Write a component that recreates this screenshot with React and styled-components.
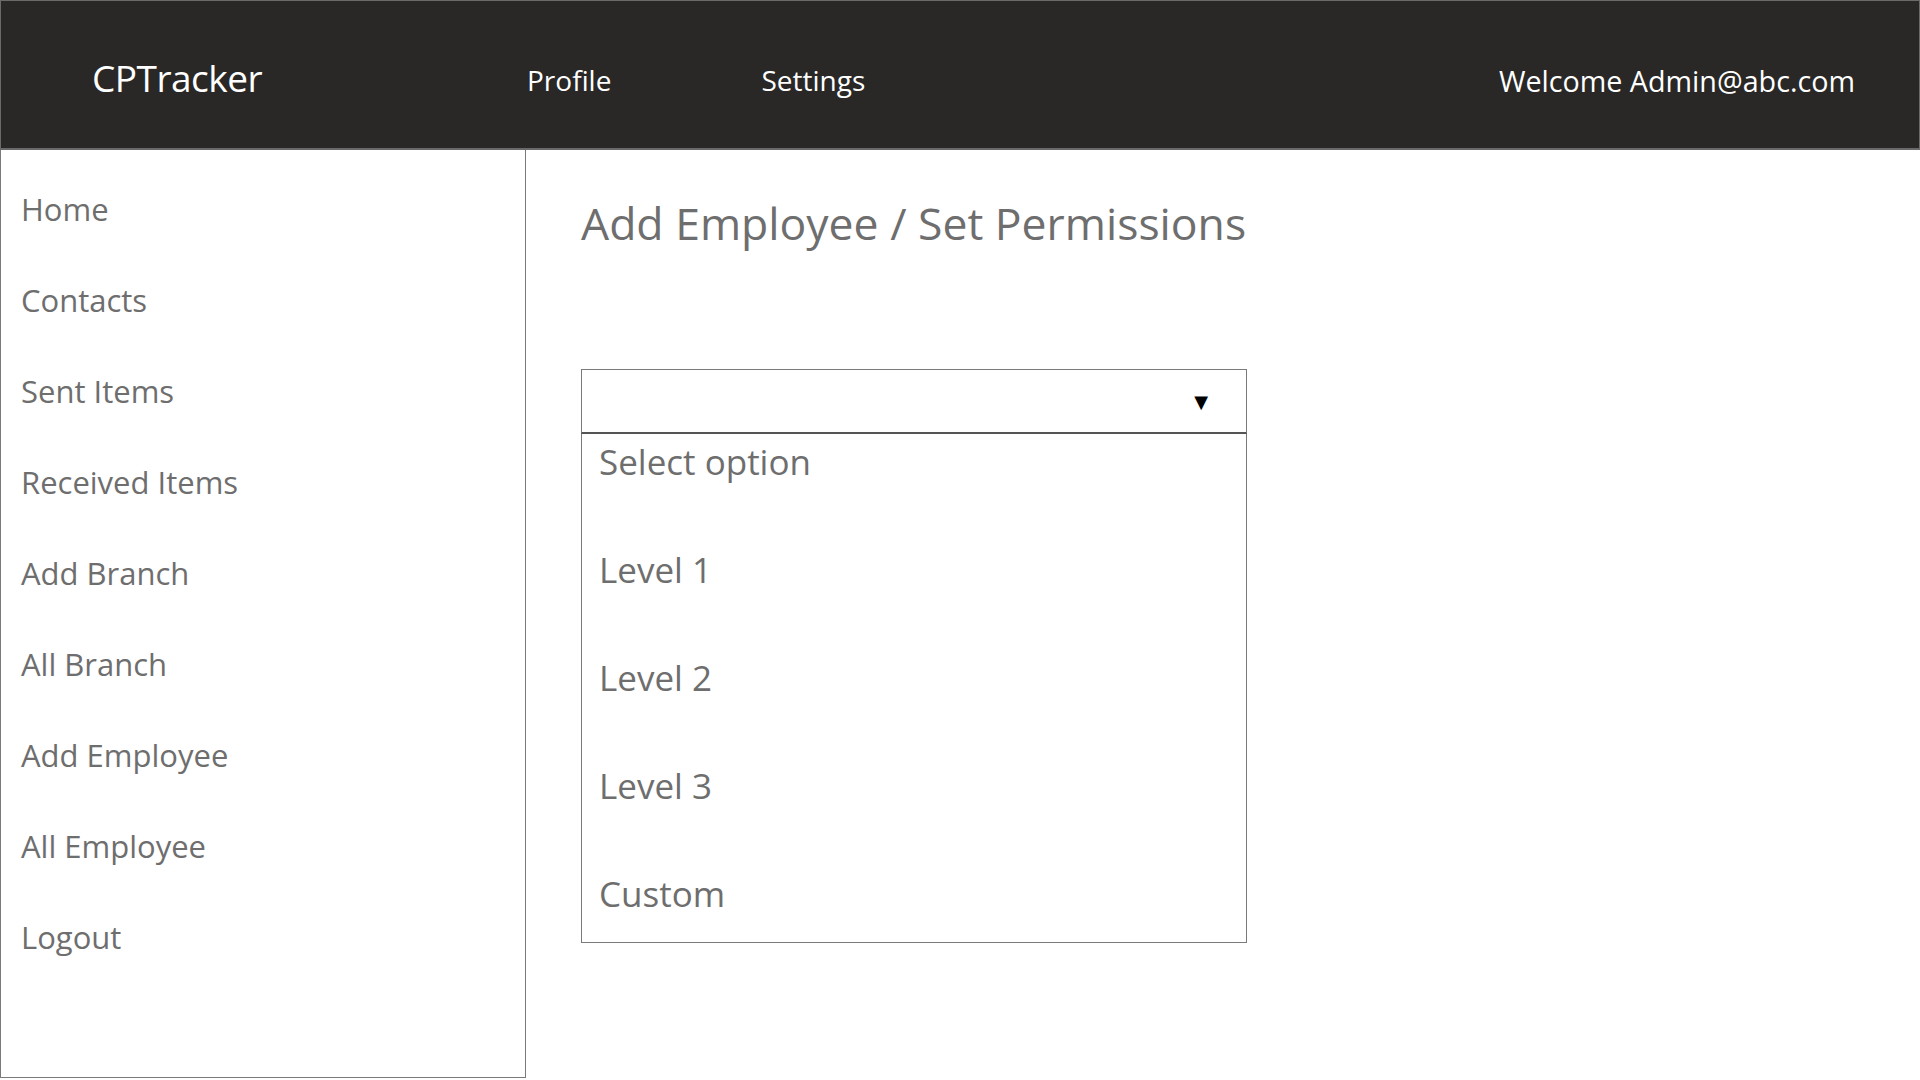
import React, { useState } from 'react';
import styled, { createGlobalStyle } from 'styled-components';

const GlobalStyle = createGlobalStyle`
  html, body {
    margin: 0;
    padding: 0;
    background: #ffffff;
  }
  body {
    font-family: "Open Sans", "Noto Sans", "Liberation Sans", sans-serif;
  }
  * {
    box-sizing: border-box;
  }
`;

const sideLinks = [
  'Home',
  'Contacts',
  'Sent Items',
  'Received Items',
  'Add Branch',
  'All Branch',
  'Add Employee',
  'All Employee',
  'Logout',
];

const levels = ['Select option', 'Level 1', 'Level 2', 'Level 3', 'Custom'];

export default function App() {
  const [level, setLevel] = useState('');

  return (
    <Page>
      <GlobalStyle />
      <Header>
        <Brand>CPTracker</Brand>
        <TopNav>
          <TopLink>Profile</TopLink>
          <TopLink>Settings</TopLink>
        </TopNav>
        <Welcome>Welcome Admin@abc.com</Welcome>
      </Header>

      <Body>
        <Sidebar>
          {sideLinks.map((link) => (
            <SideLink key={link}>{link}</SideLink>
          ))}
        </Sidebar>

        <Main>
          <Title>Add Employee / Set Permissions</Title>
          <Dropdown>
            <SelectBox>
              <Selected>{level}</Selected>
              <Arrow>▼</Arrow>
            </SelectBox>
            <OptionList>
              {levels.map((opt) => (
                <Option key={opt} onClick={() => setLevel(opt)}>
                  {opt}
                </Option>
              ))}
            </OptionList>
          </Dropdown>
        </Main>
      </Body>
    </Page>
  );
}

const Page = styled.div`
  width: 1920px;
  height: 1080px;
  display: flex;
  flex-direction: column;
  overflow: hidden;
`;

const Header = styled.header`
  height: 150px;
  flex-shrink: 0;
  background: #292826;
  border: 1px solid #6a6a6a;
  border-bottom-width: 2px;
  display: flex;
  align-items: center;
  padding: 11px 64px 0 91px;
  color: #ffffff;
`;

const Brand = styled.div`
  font-size: 37px;
  width: 435px;
  margin-top: -6px;
  letter-spacing: -0.5px;
`;

const TopNav = styled.nav`
  display: flex;
  gap: 150px;
  flex: 1;
`;

const TopLink = styled.a`
  font-size: 28px;
  cursor: pointer;
`;

const Welcome = styled.div`
  font-size: 28.7px;
`;

const Body = styled.div`
  flex: 1;
  display: flex;
`;

const Sidebar = styled.aside`
  width: 526px;
  height: 928px;
  border: 1px solid #7a7a7a;
  border-top: none;
  padding: 14px 0 0 20px;
  display: flex;
  flex-direction: column;
`;

const SideLink = styled.a`
  height: 91px;
  line-height: 91px;
  font-size: 31px;
  color: #6e6e6e;
  cursor: pointer;
`;

const Main = styled.main`
  flex: 1;
  padding: 48px 0 0 55px;
  display: flex;
  flex-direction: column;
`;

const Title = styled.h1`
  margin: 0;
  font-size: 44.5px;
  font-weight: 400;
  line-height: 50px;
  color: #6e6e6e;
`;

const Dropdown = styled.div`
  margin-top: 121px;
  width: 666px;
  display: flex;
  flex-direction: column;
`;

const SelectBox = styled.div`
  height: 65px;
  border: 1px solid #7a7a7a;
  border-bottom: 2px solid #555555;
  display: flex;
  align-items: center;
  justify-content: space-between;
  padding: 0 38px 0 17px;
`;

const Selected = styled.span`
  font-size: 30px;
  color: #6e6e6e;
`;

const Arrow = styled.span`
  font-family: "DejaVu Sans", sans-serif;
  font-size: 18px;
  color: #000000;
`;

const OptionList = styled.ul`
  list-style: none;
  margin: 0;
  padding: 0 0 20px 17px;
  border: 1px solid #7a7a7a;
  border-top: none;
  display: flex;
  flex-direction: column;
  gap: 52px;
`;

const Option = styled.li`
  height: 56px;
  line-height: 56px;
  font-size: 35px;
  color: #6e6e6e;
  cursor: pointer;
`;
